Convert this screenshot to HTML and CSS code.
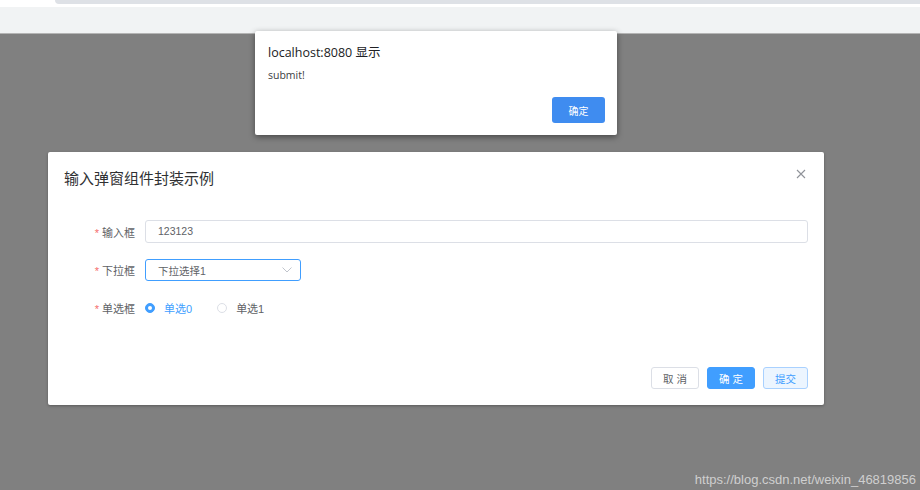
FILE: index.html
```html
<!DOCTYPE html>
<html lang="zh-CN">
<head>
    <meta charset="UTF-8">
    <meta name="viewport" content="width=device-width, initial-scale=1.0">
    <title>输入弹窗组件封装示例</title>
    <link rel="stylesheet" href="styles.css">
</head>
<body>
    <div class="chrome">
        <div class="chrome-top"><div class="chrome-tab"></div></div>
        <div class="chrome-bar"></div>
    </div>

    <div class="main">
        <div class="dialog">
            <div class="dialog-header">
                <span class="dialog-title">输入弹窗组件封装示例</span>
                <button class="dialog-close" aria-label="Close">
                    <svg width="10" height="10" viewBox="0 0 10 10">
                        <path d="M1 1L9 9M9 1L1 9" stroke="#909399" stroke-width="1.1" fill="none"/>
                    </svg>
                </button>
            </div>
            <div class="dialog-body">
                <div class="form-item">
                    <label class="form-label"><span class="req">*</span> 输入框</label>
                    <div class="form-content">
                        <div class="input">123123</div>
                    </div>
                </div>
                <div class="form-item">
                    <label class="form-label"><span class="req">*</span> 下拉框</label>
                    <div class="form-content">
                        <div class="select">
                            <span>下拉选择1</span>
                            <svg width="10" height="6" viewBox="0 0 10 6">
                                <path d="M0.5 0.5L5 5L9.5 0.5" stroke="#c0c4cc" stroke-width="1" fill="none"/>
                            </svg>
                        </div>
                    </div>
                </div>
                <div class="form-item">
                    <label class="form-label"><span class="req">*</span> 单选框</label>
                    <div class="form-content radios">
                        <span class="radio checked"><span class="radio-dot"></span>单选0</span>
                        <span class="radio"><span class="radio-dot"></span>单选1</span>
                    </div>
                </div>
            </div>
            <div class="dialog-footer">
                <button class="btn">取 消</button>
                <button class="btn btn-primary">确 定</button>
                <button class="btn btn-plain">提交</button>
            </div>
        </div>
    </div>

    <div class="alert">
        <div class="alert-title">localhost:8080 显示</div>
        <div class="alert-msg">submit!</div>
        <div class="alert-actions">
            <button class="alert-btn">确定</button>
        </div>
    </div>

    <div class="watermark">https://blog.csdn.net/weixin_46819856</div>
</body>
</html>
```

FILE: styles.css
```css
body {
    margin: 0;
    width: 920px;
    height: 490px;
    overflow: hidden;
    background-color: #808080;
    font-family: "Liberation Sans", "Noto Sans CJK SC", sans-serif;
    position: relative;
}

button {
    font-family: inherit;
    cursor: pointer;
}

.chrome {
    height: 34px;
    background-color: #f1f3f4;
    border-bottom: 1px solid #b4b4b4;
    box-sizing: border-box;
}

.chrome-top {
    height: 7px;
    background-color: #fff;
    padding-left: 55px;
}

.chrome-tab {
    height: 4px;
    background-color: #dee1e6;
    border-bottom-left-radius: 5px;
}

.main {
    padding: 118px 0 0 48px;
}

.dialog {
    width: 776px;
    background-color: #fff;
    border-radius: 2px;
    box-shadow: 0 1px 3px rgba(0, 0, 0, 0.3);
    position: relative;
}

.dialog-header {
    padding: 16px 16px 8px;
}

.dialog-title {
    font-size: 15px;
    line-height: 22px;
    color: #303133;
}

.dialog-close {
    position: absolute;
    top: 17px;
    right: 18px;
    border: none;
    background: none;
    padding: 0;
    width: 10px;
    height: 10px;
    display: flex;
}

.dialog-body {
    padding: 22px 16px 48px;
    display: flex;
    flex-direction: column;
    gap: 16px;
}

.form-item {
    display: flex;
    align-items: center;
}

.form-label {
    width: 81px;
    padding-right: 10px;
    box-sizing: border-box;
    text-align: right;
    font-size: 11px;
    color: #606266;
}

.req {
    color: #f56c6c;
}

.form-content {
    flex: 1;
}

.input {
    height: 23px;
    border: 1px solid #dcdfe6;
    border-radius: 3px;
    box-sizing: border-box;
    padding: 0 12px;
    font-size: 10.5px;
    line-height: 21px;
    color: #606266;
}

.select {
    width: 156px;
    height: 22px;
    border: 1px solid #409eff;
    border-radius: 3px;
    box-sizing: border-box;
    padding: 0 8px 0 12px;
    display: flex;
    align-items: center;
    justify-content: space-between;
    font-size: 10.5px;
    color: #606266;
}

.radios {
    display: flex;
    align-items: center;
    gap: 25px;
    height: 22px;
}

.radio {
    display: flex;
    align-items: center;
    gap: 9px;
    font-size: 11px;
    color: #606266;
}

.radio-dot {
    width: 10px;
    height: 10px;
    border: 1px solid #dcdfe6;
    border-radius: 50%;
    box-sizing: border-box;
    background-color: #fff;
    position: relative;
}

.radio.checked {
    color: #409eff;
}

.radio.checked .radio-dot {
    border-color: #409eff;
    background-color: #409eff;
}

.radio.checked .radio-dot::after {
    content: "";
    position: absolute;
    width: 4px;
    height: 4px;
    border-radius: 50%;
    background-color: #fff;
    top: 2px;
    left: 2px;
}

.dialog-footer {
    padding: 0 16px 16px;
    display: flex;
    justify-content: flex-end;
    gap: 8px;
}

.btn {
    height: 22px;
    width: 48px;
    padding: 0;
    font-size: 10.5px;
    border: 1px solid #dcdfe6;
    border-radius: 3px;
    background-color: #fff;
    color: #606266;
}

.btn-primary {
    background-color: #409eff;
    border-color: #409eff;
    color: #fff;
}

.btn-plain {
    width: 45px;
    background-color: #ecf5ff;
    border-color: #a9d1ff;
    color: #409eff;
}

.alert {
    position: absolute;
    top: 31px;
    left: 255px;
    width: 362px;
    height: 104px;
    box-sizing: border-box;
    background-color: #fff;
    border-radius: 2px;
    box-shadow: 0 2px 6px rgba(0, 0, 0, 0.45);
    padding: 13px 12px 12px 13px;
    font-family: "Open Sans", "Noto Sans CJK SC", sans-serif;
    display: flex;
    flex-direction: column;
}

.alert-title {
    font-size: 12.5px;
    line-height: 18px;
    color: #202124;
}

.alert-msg {
    margin-top: 5px;
    font-size: 10.5px;
    line-height: 16px;
    color: #3c4043;
}

.alert-actions {
    margin-top: auto;
    display: flex;
    justify-content: flex-end;
}

.alert-btn {
    width: 53px;
    height: 26px;
    border: none;
    border-radius: 3px;
    background-color: #3f8cf0;
    color: #fff;
    font-size: 10px;
    font-family: "Noto Sans CJK SC", sans-serif;
}

.watermark {
    position: absolute;
    right: 4px;
    bottom: 3px;
    font-size: 13px;
    color: #cfcfcf;
    font-family: "Liberation Sans", sans-serif;
}
```
